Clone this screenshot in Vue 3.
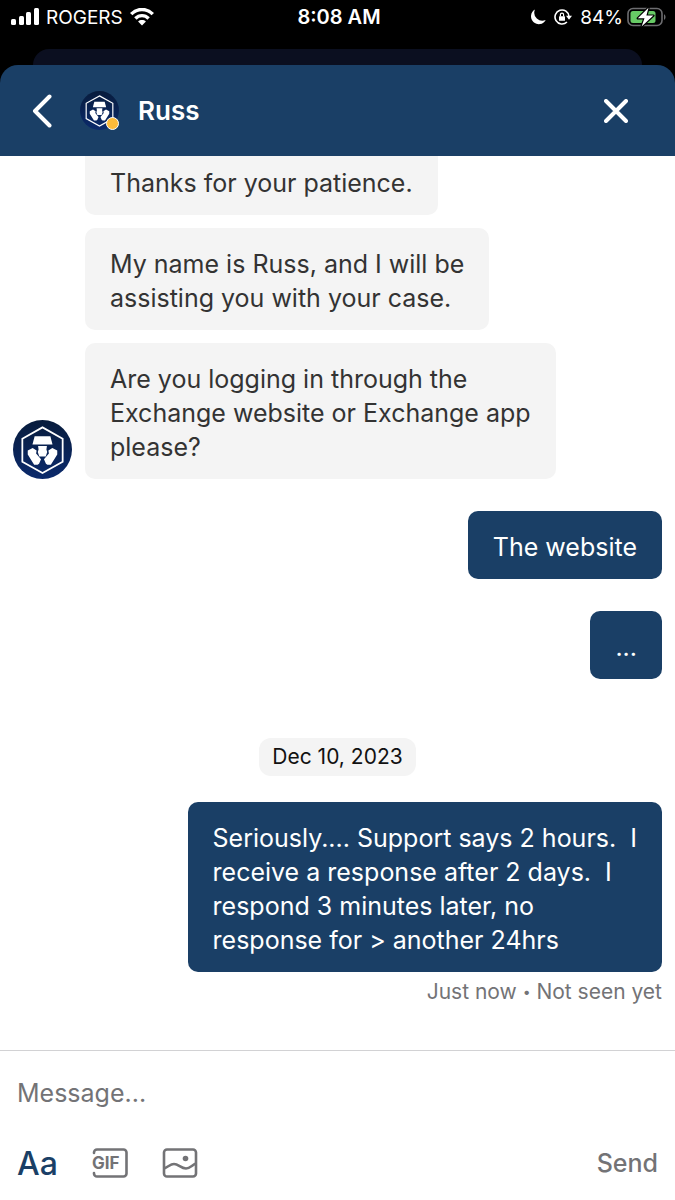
<template>
  <div class="phone">
    <div class="status-bar">
      <div class="status-left">
        <svg class="signal" viewBox="0 0 28 18" width="28" height="18" fill="#fff">
          <rect x="0" y="11" width="5" height="6" rx="1.5" />
          <rect x="8" y="8" width="5" height="9" rx="1.5" />
          <rect x="15" y="4" width="5" height="13" rx="1.5" />
          <rect x="23" y="0" width="5" height="17" rx="1.5" />
        </svg>
        <span class="carrier">ROGERS</span>
        <svg viewBox="0 0 24 18" width="24" height="18" fill="none" stroke="#fff" stroke-width="3.4">
          <path d="M1.2 6.1C7.3-.1 16.7-.1 22.8 6.1" />
          <path d="M5.4 10.5C9.1 6.7 14.9 6.7 18.6 10.5" />
          <path d="M12 17.5l-3.9-4c2.2-1.9 5.6-1.9 7.8 0z" fill="#fff" stroke="none" />
        </svg>
      </div>
      <span class="clock">8:08 AM</span>
      <div class="status-right">
        <svg viewBox="0 0 16 16" width="16" height="16" fill="#fff">
          <path d="M4.9.6A7.8 7.8 0 1 0 15.7 11 8.1 8.1 0 0 1 4.9.6z" />
        </svg>
        <svg class="lock" viewBox="0 0 18 18" width="18" height="18" fill="none" stroke="#fff" stroke-width="1.6">
          <path d="M12.95 13.95A7 7 0 1 1 15 8.5" />
          <path d="M12 7.8h6L15 11.8z" fill="#fff" stroke="none" />
          <rect x="5" y="8.2" width="6" height="4.6" rx=".6" fill="#fff" stroke="none" />
          <path d="M6.4 8.5V6.8a1.6 1.6 0 0 1 3.2 0V8.5" stroke-width="1.2" />
        </svg>
        <span class="percent">84%</span>
        <svg viewBox="0 0 40 20" width="40" height="20">
          <rect x="1" y="1.5" width="34" height="17" rx="5" fill="none" stroke="#6d6d70" stroke-width="1.6" />
          <rect x="3.5" y="4" width="25" height="12" rx="2.5" fill="#67cb65" />
          <path d="M37 7.2c2 .8 2 4.8 0 5.6z" fill="#6d6d70" />
          <path d="M21.5.8L10.8 11.3h6.7L14.6 19.4 26.4 8.6h-7z" fill="#fff" stroke="#000" stroke-width="2.4" paint-order="stroke" stroke-linejoin="round" />
        </svg>
      </div>
    </div>
    <div class="sheet-behind"></div>

    <main class="sheet">
      <header class="chat-header">
        <button class="icon-btn back" type="button" aria-label="Back">
          <svg viewBox="0 0 20 34" width="20" height="34" fill="none" stroke="#fff" stroke-width="4" stroke-linecap="round" stroke-linejoin="round">
            <path d="M17.5 2.5L3 17l14.5 14.5" />
          </svg>
        </button>
        <div class="header-avatar">
          <svg class="avatar-small" viewBox="0 0 60 60" aria-hidden="true"><use href="#lion" /></svg>
          <span class="presence"></span>
        </div>
        <h1 class="agent-name">Russ</h1>
        <button class="icon-btn" type="button" aria-label="Close">
          <svg viewBox="0 0 24 24" width="24" height="24" fill="none" stroke="#fff" stroke-width="4" stroke-linecap="round">
            <path d="M2 2l20 20M22 2L2 22" />
          </svg>
        </button>
      </header>

      <section class="messages">
        <div class="agent-group">
          <svg class="avatar" viewBox="0 0 60 60" aria-hidden="true">
            <defs>
              <linearGradient id="navy" x1="0" y1="0" x2="0" y2="1">
                <stop offset="0" stop-color="#081c3c" />
                <stop offset="1" stop-color="#0b2a6c" />
              </linearGradient>
              <g id="lion">
                <circle cx="30" cy="30" r="30" fill="url(#navy)" />
                <path d="M30 7.5L50.5 19v23.5L30 54 9.5 42.5V19z" fill="none" stroke="#fff" stroke-width="1.8" />
                <path d="M22 16.5h16l2.2 8.5H19.8z" fill="#fff" />
                <path d="M25.5 26.5h9l-.5 3.5.8 2.5-1.5 4.5h-6.6l-1.5-4.5.8-2.5z" fill="#fff" />
                <path d="M20 28.5l4 2.5-.5 3 5 6-2 4.5-1.5 1h-3.5L15 35v-4z" fill="#fff" />
                <path d="M40 28.5l-4 2.5.5 3-5 6 2 4.5 1.5 1h3.5L45 35v-4z" fill="#fff" />
              </g>
            </defs>
            <use href="#lion" />
          </svg>
          <div class="bubbles">
            <p v-for="text in agentMessages" :key="text" class="bubble">{{ text }}</p>
          </div>
        </div>

        <p v-for="text in replies" :key="text" class="bubble bubble-own">{{ text }}</p>

        <time class="date" datetime="2023-12-10">Dec 10, 2023</time>

        <p class="bubble bubble-own bubble-last">{{ lastReply }}</p>
        <p class="receipt">Just now <span class="dot">•</span> Not seen yet</p>
      </section>

      <form class="composer" @submit.prevent="send">
        <input v-model="draft" class="message-input" type="text" placeholder="Message..." aria-label="Message" />
        <div class="toolbar">
          <button class="icon-btn text-tool" type="button" aria-label="Text">Aa</button>
          <button class="icon-btn" type="button" aria-label="GIF">
            <svg viewBox="0 0 36 30" width="36" height="30" fill="none" stroke="#737376" stroke-width="2.6" stroke-linecap="round">
              <path d="M2 5V4.5a3 3 0 0 1 3-3h26.5a3 3 0 0 1 3 3v21a3 3 0 0 1-3 3H5a3 3 0 0 1-3-3V25" />
              <text class="gif-text" x="0" y="21">GIF</text>
            </svg>
          </button>
          <button class="icon-btn" type="button" aria-label="Image">
            <svg viewBox="0 0 36 30" width="36" height="30" fill="none" stroke="#737376" stroke-width="2.6">
              <rect x="2" y="1.5" width="32" height="27" rx="3" />
              <path d="M2 20.5c4-1.5 6.5-4.5 10-4.5 4.5 0 7 4.500 12 4.500 4 0 6-3.500 10-5" />
              <circle cx="23.500" cy="10.500" r="2.800" fill="#737376" stroke="none" />
            </svg>
          </button>
          <button class="icon-btn send" type="submit">Send</button>
        </div>
      </form>
    </main>
  </div>
</template>

<script setup>
import { ref } from 'vue'

const draft = ref('')

const agentMessages = [
  'Thanks for your patience.',
  'My name is Russ, and I will be\nassisting you with your case.',
  'Are you logging in through the\nExchange website or Exchange app\nplease?'
]

const replies = ref(['The website', '...'])

const lastReply =
  'Seriously.... Support says 2 hours.  I\nreceive a response after 2 days.  I\nrespond 3 minutes later, no\nresponse for > another 24hrs'

function send() {
  const text = draft.value.trim()
  if (!text) return
  replies.value.push(text)
  draft.value = ''
}
</script>

<style>
body {
  margin: 0;
  background: #000;
}
</style>

<style scoped>
.phone {
  height: 100vh;
  display: flex;
  flex-direction: column;
  background: #000;
  font-family: Inter, "Liberation Sans", sans-serif;
}

.status-bar {
  height: 49px;
  box-sizing: border-box;
  padding: 0 8px 15px 11px;
  display: grid;
  grid-template-columns: 1fr auto 1fr;
  align-items: center;
  color: #fff;
  font-size: 19px;
}

.status-left,
.status-right {
  display: flex;
  align-items: center;
}

.status-left {
  gap: 7px;
}

.status-right {
  justify-content: flex-end;
}

.clock {
  font-size: 20px;
  font-weight: 600;
}

.lock {
  margin: 0 8px;
}

.percent {
  margin-right: 4px;
}

.sheet-behind {
  height: 16px;
  flex-shrink: 0;
  margin: 0 33px;
  border-radius: 16px 16px 0 0;
  background: #0b0f20;
}

.sheet {
  flex: 1;
  min-height: 0;
  display: flex;
  flex-direction: column;
}

.chat-header {
  height: 91px;
  flex-shrink: 0;
  box-sizing: border-box;
  padding: 0 47px 0 32px;
  display: flex;
  align-items: center;
  border-radius: 18px 18px 0 0;
  background: #1a3f66;
}

.icon-btn {
  display: flex;
  align-items: center;
  padding: 0;
  border: 0;
  background: none;
  font-family: inherit;
  cursor: pointer;
}

.back {
  margin-right: 28px;
}

.header-avatar {
  position: relative;
  width: 39px;
  height: 39px;
}

.avatar-small {
  display: block;
  width: 39px;
  height: 39px;
}

.presence {
  position: absolute;
  right: 0;
  bottom: 0;
  width: 11px;
  height: 11px;
  border: 1px solid #fff;
  border-radius: 50%;
  background: #fdbb3a;
}

.agent-name {
  flex: 1;
  margin: 0 0 0 19px;
  color: #fff;
  font-size: 26px;
  font-weight: 600;
}

.messages {
  flex: 1;
  min-height: 0;
  overflow: hidden;
  padding: 0 13px;
  display: flex;
  flex-direction: column;
  justify-content: flex-end;
  background: #fff;
}

.agent-group {
  display: flex;
  align-items: flex-end;
  gap: 13px;
}

.avatar {
  width: 59px;
  height: 59px;
  flex-shrink: 0;
}

.bubbles {
  display: flex;
  flex-direction: column;
  align-items: flex-start;
  gap: 13px;
}

.bubble {
  margin: 0;
  padding: 19px 25px 15px;
  border-radius: 10px;
  background: #f4f4f4;
  color: #333;
  font-size: 25px;
  line-height: 34px;
  white-space: pre-wrap;
}

.bubble-own {
  align-self: flex-end;
  margin-top: 32px;
  background: #1a3f66;
  color: #fff;
}

.date {
  align-self: center;
  margin-top: 59px;
  padding: 4px 13px;
  border-radius: 12px;
  background: #f4f4f4;
  color: #111;
  font-size: 21px;
  line-height: 30px;
}

.bubble-last {
  margin-top: 26px;
}

.receipt {
  align-self: flex-end;
  margin: 5px 0 43px;
  color: #737376;
  font-size: 21px;
  line-height: 30px;
}

.dot {
  font-size: 14px;
  line-height: 1;
  vertical-align: 2px;
}

.composer {
  padding: 24px 17px 19px;
  border-top: 1px solid #d2d2d4;
  background: #fff;
}

.message-input {
  display: block;
  width: 100%;
  height: 36px;
  padding: 0;
  border: 0;
  outline: 0;
  background: none;
  color: #333;
  font-family: inherit;
  font-size: 25px;
}

.message-input::placeholder {
  color: #737376;
  opacity: 1;
}

.toolbar {
  display: flex;
  align-items: center;
  gap: 34px;
  margin-top: 34px;
  height: 36px;
}

.text-tool {
  color: #1a3f66;
  font-size: 32px;
  font-weight: 500;
}

.gif-text {
  fill: #737376;
  stroke: none;
  font-size: 17px;
  font-weight: 700;
}

.send {
  margin-left: auto;
  color: #737376;
  font-size: 25px;
  font-weight: 500;
}
</style>
